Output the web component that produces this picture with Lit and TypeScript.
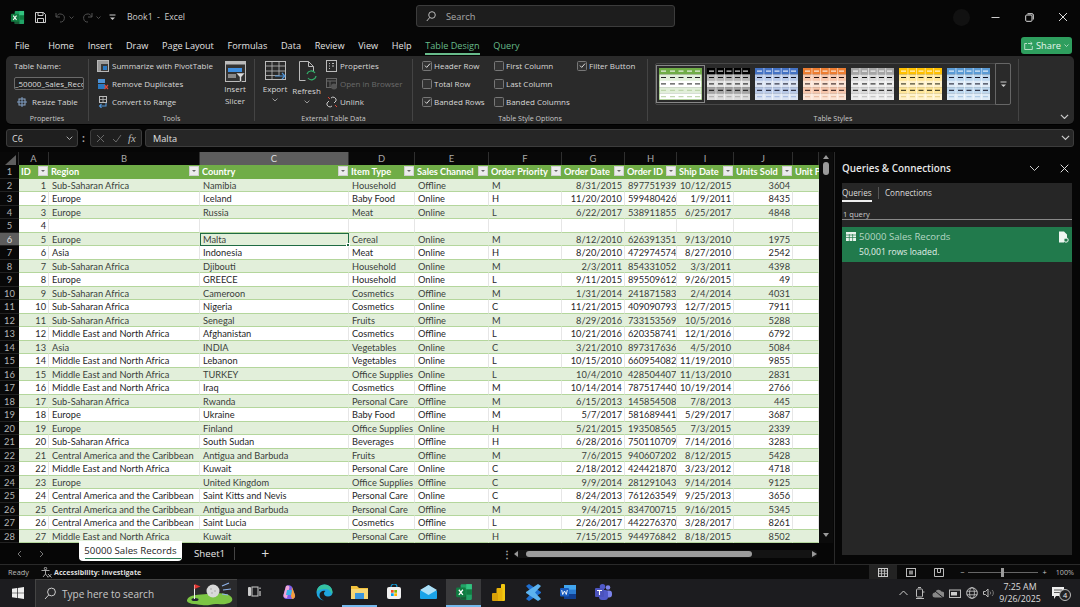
import { LitElement, html, css, svg } from "lit";
import { customElement } from "lit/decorators.js";

type Row = string[];
const D: Row[] = [
  ["1","Sub-Saharan Africa","Namibia","Household","Offline","M","8/31/2015","897751939","10/12/2015","3604"],
  ["2","Europe","Iceland","Baby Food","Online","H","11/20/2010","599480426","1/9/2011","8435"],
  ["3","Europe","Russia","Meat","Online","L","6/22/2017","538911855","6/25/2017","4848"],
  ["4","","","","","","","","",""],
  ["5","Europe","Malta","Cereal","Online","M","8/12/2010","626391351","9/13/2010","1975"],
  ["6","Asia","Indonesia","Meat","Online","H","8/20/2010","472974574","8/27/2010","2542"],
  ["7","Sub-Saharan Africa","Djibouti","Household","Online","M","2/3/2011","854331052","3/3/2011","4398"],
  ["8","Europe","GREECE","Household","Online","L","9/11/2015","895509612","9/26/2015","49"],
  ["9","Sub-Saharan Africa","Cameroon","Cosmetics","Offline","M","1/31/2014","241871583","2/4/2014","4031"],
  ["10","Sub-Saharan Africa","Nigeria","Cosmetics","Online","C","11/21/2015","409090793","12/7/2015","7911"],
  ["11","Sub-Saharan Africa","Senegal","Fruits","Offline","M","8/29/2016","733153569","10/5/2016","5288"],
  ["12","Middle East and North Africa","Afghanistan","Cosmetics","Offline","L","10/21/2016","620358741","12/1/2016","6792"],
  ["13","Asia","INDIA","Vegetables","Online","C","3/21/2010","897317636","4/5/2010","5084"],
  ["14","Middle East and North Africa","Lebanon","Vegetables","Online","L","10/15/2010","660954082","11/19/2010","9855"],
  ["15","Middle East and North Africa","TURKEY","Office Supplies","Online","L","10/4/2010","428504407","11/13/2010","2831"],
  ["16","Middle East and North Africa","Iraq","Cosmetics","Offline","M","10/14/2014","787517440","10/19/2014","2766"],
  ["17","Sub-Saharan Africa","Rwanda","Personal Care","Offline","M","6/15/2013","145854508","7/8/2013","445"],
  ["18","Europe","Ukraine","Baby Food","Offline","M","5/7/2017","581689441","5/29/2017","3687"],
  ["19","Europe","Finland","Office Supplies","Online","H","5/21/2015","193508565","7/3/2015","2339"],
  ["20","Sub-Saharan Africa","South Sudan","Beverages","Offline","H","6/28/2016","750110709","7/14/2016","3283"],
  ["21","Central America and the Caribbean","Antigua and Barbuda","Fruits","Offline","M","7/6/2015","940607202","8/12/2015","5428"],
  ["22","Middle East and North Africa","Kuwait","Personal Care","Online","C","2/18/2012","424421870","3/23/2012","4718"],
  ["23","Europe","United Kingdom","Office Supplies","Offline","C","9/9/2014","281291043","9/14/2014","9125"],
  ["24","Central America and the Caribbean","Saint Kitts and Nevis","Personal Care","Online","C","8/24/2013","761263549","9/25/2013","3656"],
  ["25","Central America and the Caribbean","Antigua and Barbuda","Personal Care","Offline","M","9/4/2015","834700715","9/16/2015","5345"],
  ["26","Central America and the Caribbean","Saint Lucia","Cosmetics","Offline","L","2/26/2017","442276370","3/28/2017","8261"],
  ["27","Middle East and North Africa","Kuwait","Personal Care","Offline","H","7/15/2015","944976842","8/18/2015","8502"],
];
const HEAD = ["ID","Region","Country","Item Type","Sales Channel","Order Priority","Order Date","Order ID","Ship Date","Units Sold","Unit Price"];
const LET = ["A","B","C","D","E","F","G","H","I","J",""];
const RIGHT = new Set([0,6,7,8,9]);

const THUMBS = [
  ["#70ad47","#e2efda","#ffffff","#e2efda","#ffffff","#fff","#222","#b5cfa0"],
  ["#000000","#b5b5b5","#e2e2e2","#a5a5a5","#dcdcdc","#fff","#111","#aaa"],
  ["#4472c4","#b8c9e8","#dae3f3","#b8c9e8","#dae3f3","#fff","#112","#9fb4dc"],
  ["#ed7d31","#f6c6ac","#fbe4d5","#f6c6ac","#fbe4d5","#fff","#211","#e4b49a"],
  ["#a5a5a5","#d9d9d9","#ededed","#d9d9d9","#ededed","#fff","#111","#bbb"],
  ["#ffc000","#ffe699","#fff2cc","#ffe699","#fff2cc","#fff","#221","#e6ce80"],
  ["#5b9bd5","#bdd7ee","#deebf7","#bdd7ee","#deebf7","#fff","#112","#a4c3df"],
];

const thumb = (c: string[]) => html`<svg width="43" height="32" viewBox="0 0 43 32">
  ${[0,1,2,3,4].map(i => svg`<rect x="0" y="${i*6.4}" width="43" height="6.6" fill="${c[i]}"/>
    ${[2,11,19.5,28,36].map(x => svg`<rect x="${x}" y="${i*6.4+2.6}" width="5" height="1" fill="${i===0?c[5]:i===4?c[7]:i===3&&c[0]==="#70ad47"?c[7]:c[6]}"/>`)}`)}
  ${i8(c)}
</svg>`;
function i8(c: string[]) {
  return c[0]==="#70ad47" ? svg`<rect x="0" y="0" width="43" height="32" fill="none" stroke="#70ad47" stroke-width="1"/>`
    : [8.6,17.2,25.8,34.4].map(x => svg`<rect x="${x}" y="0" width=".7" height="32" fill="#fff" opacity=".7"/>`);
}

const chev = (w=6,col="#bbb") => html`<svg width="${w}" height="${w*.6}" viewBox="0 0 10 6"><path d="M1 1l4 4 4-4" fill="none" stroke="${col}" stroke-width="1.3"/></svg>`;
const check = html`<svg width="9" height="9" viewBox="0 0 9 9"><path d="M2 4.6l1.7 1.8L7 2.6" fill="none" stroke="#ddd" stroke-width="1"/></svg>`;
const xlIcon = (s=14) => html`<svg width="${s}" height="${s}" viewBox="0 0 16 16"><rect x="5" y="1" width="10" height="14" rx="1" fill="#21a366"/><rect x="10" y="1" width="5" height="4.7" fill="#33c481"/><rect x="5" y="10.4" width="5" height="4.6" fill="#185c37"/><rect x="10" y="5.7" width="5" height="4.7" fill="#107c41"/><rect x="1" y="4" width="8.6" height="8.6" rx="1" fill="#107c41"/><path d="M3.4 6l3.6 4.6M7 6l-3.6 4.6" stroke="#fff" stroke-width="1.1"/></svg>`;

@customElement("app-root")
export class AppRoot extends LitElement {
  static styles = css`
    :host { display:block; width:1080px; height:607px; overflow:hidden; background:#060606; color:#ddd;
      font-family:"Open Sans","Noto Sans",sans-serif; font-size:8px; }
    svg { display:block; flex:none; }
    .title { height:34px; display:flex; align-items:center; position:relative; }
    .logo { margin-left:10px; }
    .save { margin-left:10px; }
    .undo { margin-left:9px; opacity:.45; }
    .small { margin-left:3px; opacity:.6; }
    .redo { margin-left:8px; opacity:.45; }
    .cust { margin-left:8px; }
    .bname { margin-left:11px; width:63px; font-size:8.7px; color:#ccc; white-space:nowrap; }
    .search { margin-left:226px; width:259px; height:22px; box-sizing:border-box; border:1px solid #3c3c3c; border-radius:3px; background:#1d1d1d;
      display:flex; align-items:center; gap:10px; padding-left:9px; color:#aaa; font-size:9.3px; margin-top:-2px; }
    .avatar { margin-left:278px; width:17px; height:17px; border-radius:50%; background:#111; }
    .wbtn { display:flex; justify-content:center; align-items:center; width:34px; }
    .wbtn.first { margin-left:8px; }
    .tabs { height:22px; display:flex; align-items:center; padding-left:15px; gap:13.7px; font-size:9.15px; color:#e4e4e4; position:relative; }
    .tab.file { margin-right:5px; }
    .tab.g { color:#68bb8b; }
    .tab.on { position:relative; }
    .tab.on::after { content:""; position:absolute; left:0; right:0; bottom:-3px; height:1.5px; background:#68bb8b; }
    .share { margin-left:auto; margin-right:8px; width:51px; height:17px; box-sizing:border-box; border-radius:3px; background:#2e9e5e; color:#e6f5ec;
      display:flex; align-items:center; justify-content:center; gap:3px; font-size:9.3px; }
    .ribbon { margin:0 6px; height:68px; background:#2a2a2a; border-radius:5px; display:flex; box-shadow:0 1px 0 #000; position:relative; color:#d8d8d8; }
    .grp { display:flex; flex-direction:column; border-right:1px solid #444; margin:3px 0; box-sizing:border-box; flex:none; }
    .gbody { flex:1; display:flex; min-height:0; }
    .glabel { height:12px; line-height:12px; text-align:center; font-size:7.1px; color:#c8c8c8; margin-bottom:-3px; }
    .stack { display:flex; flex-direction:column; justify-content:space-between; height:49px; }
    .line { display:flex; align-items:center; height:13px; gap:3px; white-space:nowrap; }
    .dim { color:#6a6a6a; }
    .tname { width:70px; height:13px; box-sizing:border-box; border:1px solid #6a6a6a; border-radius:2px; font-size:8px; line-height:11px; overflow:hidden; white-space:nowrap; color:#ddd; background:#222; }
    .big { display:flex; flex-direction:column; align-items:center; line-height:12px; text-align:center; padding-top:2px; box-sizing:border-box; }
    .big .tx { margin-top:1px; }
    .big .tx.r { margin-top:3px; }
    .big .cv { margin-top:3px; }
    .cb { width:10px; height:10px; box-sizing:border-box; border:1px solid #777; border-radius:1.5px; display:flex; align-items:center; justify-content:center; background:#333; }
    .gal { position:relative; margin:4px 0 0 7px; width:356px; height:42px; box-sizing:border-box; border:1px solid #484848; border-radius:2px; display:flex; align-items:center; padding-left:3px; gap:5px; }
    .gal .t { flex:none; padding:0; }
    .gal .t.on { outline:1px solid #888; outline-offset:2px; }
    .gdd { position:absolute; right:-1px; top:-1px; bottom:-1px; width:16px; border:1px solid #666; border-radius:0 2px 2px 0; display:flex; align-items:center; justify-content:center; background:#2a2a2a; box-sizing:border-box; }
    .collapse { position:absolute; right:5px; bottom:5px; }
    .fbar { margin:5px 6px 5px; height:18px; display:flex; align-items:stretch; }
    .nbox { width:72px; box-sizing:border-box; padding:0 4px 0 5px; border:1px solid #3c3c3c; border-radius:3px; background:#1f1f1f; display:flex; justify-content:space-between; align-items:center; font-size:9px; color:#ddd; }
    .fdots { width:13px; display:flex; align-items:center; justify-content:center; color:#aaa; font-weight:700; font-size:10px; margin-left:-1px; }
    .fbtn { width:52px; box-sizing:border-box; border:1px solid #3c3c3c; border-radius:3px; background:#1f1f1f; display:flex; align-items:center; justify-content:space-between; padding:0 5px; }
    .fx { font-family:"Liberation Serif",serif; font-style:italic; font-size:11px; color:#bbb; }
    .ftext { flex:1; margin-left:3px; box-sizing:border-box; border:1px solid #3c3c3c; border-radius:3px; background:#262626; display:flex; align-items:center; justify-content:space-between; padding:0 3px 0 7px; font-size:9.2px; color:#e0e0e0; }
    .main { height:413px; display:flex; border-bottom:1px solid #2a2a2a; box-sizing:border-box; }
    .sheet { width:835px; border-right:1px solid #2a2a2a; box-sizing:border-box; display:flex; flex-direction:column; flex:none; }
    .upper { display:flex; height:391px; }
    .gridwrap { width:819px; flex:none; }
    .cols { display:grid; height:13px; font-family:Lato,"Open Sans",sans-serif; font-size:9.4px; color:#a9a9a9; }
    .cols > div { display:flex; align-items:center; justify-content:center; border-right:1px solid #2f2f2f; box-sizing:border-box; background:#080808; }
    .cols > div.sel { background:#5d5d5d; color:#ddd; }
    .corner { position:relative; }
    .corner::after { content:""; position:absolute; right:2px; bottom:0; border-style:solid; border-width:0 0 10px 11px; border-color:transparent transparent #5e5e5e transparent; }
    .rows { display:grid; grid-auto-rows:13.5px; font-family:Lato,"Carlito",sans-serif; font-size:9.25px; color:#1f1f1f; }
    .c { box-sizing:border-box; overflow:hidden; white-space:nowrap; padding:0 2px 0 3px; line-height:13.5px; border-bottom:1px solid #b4d69c; background:#fff; border-right:1px solid #e6e6e6; position:relative; }
    .c.band { background:#e2efda; border-right-color:#e2efda; color:#3a3f3a; }
    .c.rt { text-align:right; }
    .c.sel { outline:1.5px solid #1f6b43; outline-offset:-1px; z-index:2; overflow:visible; }
    .c.sel::after { content:""; position:absolute; right:-2px; bottom:-2px; width:4px; height:4px; background:#1f6b43; border:.5px solid #fff; box-sizing:border-box; }
    .rh { background:#080808; color:#b4b4b4; text-align:center; line-height:13.5px; font-family:Lato,sans-serif; font-size:9.4px; border-bottom:1px solid #222; box-sizing:border-box; }
    .rh.sel { background:#5d5d5d; color:#ddd; }
    .h { background:#70ad47; color:#fff; font-weight:700; box-sizing:border-box; display:flex; align-items:center; padding:0 0 0 2px; white-space:nowrap; overflow:hidden; border-bottom:1px solid #70ad47; font-size:9.2px; }
    .h span { flex:1; overflow:hidden; }
    .fb { width:10px; height:10px; flex:none; background:#ececec; border:.5px solid #d0d0d0; box-sizing:border-box; margin-right:1px; display:flex; align-items:center; justify-content:center; }
    .fb::before { content:""; border-style:solid; border-width:2.5px 2px 0 2px; border-color:#666 transparent transparent transparent; }
    .vs { width:14px; flex:none; background:#0b0b0b; display:flex; flex-direction:column; align-items:center; padding-top:3px; position:relative; }
    .vthumb { width:6px; height:13px; border-radius:3px; background:#9a9a9a; margin-top:3px; }
    .tri-up { border-style:solid; border-width:0 3.5px 4px 3.5px; border-color:transparent transparent #999 transparent; }
    .tri-dn { border-style:solid; border-width:4px 3.5px 0 3.5px; border-color:#999 transparent transparent transparent; position:absolute; bottom:6px; }
    .sbar { flex:1; display:flex; align-items:center; position:relative; }
    .nav { width:79px; display:flex; padding-left:17px; gap:17px; box-sizing:border-box; }
    .stab { width:103px; height:20px; align-self:flex-start; margin-top:-2px; background:#fff; color:#1e1e1e; border-radius:0 0 4px 4px; box-sizing:border-box; display:flex; align-items:flex-start; justify-content:center; font-size:9.7px; padding-top:3px; border-bottom:2px solid #fff; position:relative; z-index:3; }
    .stab::after { content:""; position:absolute; left:6px; right:1px; bottom:0; height:1.5px; background:#2a7a52; }
    .s1 { margin-left:12px; font-size:9.7px; color:#e8e8e8; padding-right:9px; border-right:1px solid #444; line-height:13px; }
    .plus { margin-left:26px; font-size:14px; color:#ddd; line-height:13px; }
    .dots { margin-left:233px; color:#aaa; font-weight:700; font-size:10px; }
    .hs { margin-left:3px; display:flex; align-items:center; width:302px; gap:3px; height:8px; background:#131313; border-radius:4px; position:relative; }
    .hthumb { width:226px; height:6px; border-radius:3px; background:#9c9c9c; margin-left:5px; }
    .tl { border-style:solid; border-width:3px 4px 3px 0; border-color:transparent #999 transparent transparent; margin-left:-1px; }
    .tr { border-style:solid; border-width:3.5px 0 3.5px 5px; border-color:transparent transparent transparent #999; margin-left:auto; }
    .panel { margin-left:7px; width:230px; display:flex; flex-direction:column; height:399px; margin-top:4px; }
    .ptitle { height:24px; margin-bottom:3px; display:flex; align-items:center; color:#e8e8e8; font-size:9.9px; font-weight:600; }
    .ptitle span { flex:1; }
    .ptitle svg + svg { margin-left:20px; margin-right:3px; }
    .pbody { flex:1; background:#262626; display:flex; flex-direction:column; }
    .ptabs { height:19px; display:flex; align-items:center; font-size:8.1px; color:#ddd; }
    .ptabs .q { width:30px; height:19px; line-height:19px; border-bottom:2px solid #eee; box-sizing:border-box; }
    .ptabs .sp { width:1px; height:12px; background:#555; margin:0 6px 0 6px; }
    .pcount { height:18px; line-height:24px; font-size:7.6px; padding-left:1px; color:#ccc; border-bottom:1px solid #888; box-sizing:border-box; }
    .card { margin-top:7px; height:35px; box-sizing:border-box; background:#217a4c; padding:3px 3px 0 4px; color:#c9e2d3; }
    .card .a { display:flex; align-items:center; gap:3px; font-size:9.6px; height:13px; color:#b5d6c3; }
    .card .a span { flex:1; }
    .card .b { margin:3px 0 0 13px; font-size:8.6px; color:#e2efe8; }
    .status { height:14px; display:flex; align-items:center; font-size:7.4px; color:#bbb; padding-left:8px; background:#0a0a0a; }
    .acc { margin-left:12px; display:flex; align-items:center; gap:2px; font-weight:700; color:#ddd; font-size:7.1px; }
    .views { margin-left:auto; display:flex; align-items:center; }
    .v { width:28px; height:14px; display:flex; align-items:center; justify-content:center; }
    .v.on { background:#232323; }
    .zoom { display:flex; align-items:center; margin-left:7px; gap:3px; color:#ccc; }
    .zl { width:70px; height:1px; background:#666; position:relative; margin:0 1px; }
    .zt { position:absolute; left:33px; top:-4px; width:3px; height:9px; background:#9b9b9b; }
    .pct { margin:0 6px 0 9px; font-size:7.2px; }
    .task { height:28px; background:#1c1c1f; display:flex; align-items:center; color:#ccc; }
    .start { width:35px; display:flex; justify-content:center; }
    .tsearch { width:202px; height:28px; box-sizing:border-box; background:#2a2a2c; border-left:1px solid #444; border-top:1px solid #444; display:flex; align-items:center; padding-left:8px; gap:6px; font-size:10px; color:#c8c8c8; position:relative; }
    .tsearch span { flex:1; white-space:nowrap; }
    .tsearch svg:last-child { margin-right:3px; }
    .apps { display:flex; align-items:center; }
    .app { width:34.9px; height:28px; display:flex; align-items:center; justify-content:center; box-sizing:border-box; border-bottom:2px solid transparent; }
    .app.line2 { border-bottom-color:#76b9ed; }
    .app.act { background:#3a3a3c; }
    .tray { margin-left:auto; display:flex; align-items:center; }
    .ti { width:17px; display:flex; justify-content:center; }
    .clock { width:46px; text-align:center; font-size:8.8px; line-height:12.4px; color:#ddd; }
    .notif { width:37px; display:flex; justify-content:center; position:relative; padding-right:7px; box-sizing:border-box; }
    .badge { position:absolute; left:16px; top:2px; width:10px; height:10px; border:1px solid #bbb; border-radius:50%; background:#222; font-size:7.4px; text-align:center; line-height:10px; color:#eee; }
  `;

  get cols() { return "19px 30px 151px 149px 66px 74px 73px 63px 52px 57px 59px 26px"; }

  renderRibbon() {
    const g = (w: number, label: string, body: unknown) => html`<div class="grp" style="width:${w}px"><div class="gbody">${body}</div><div class="glabel">${label}</div></div>`;
    const cb = (on: boolean, t: string) => html`<div class="line" style="gap:2px"><div class="cb">${on ? check : ""}</div><span>${t}</span></div>`;
    return html`<div class="ribbon">
      ${g(83, "Properties", html`<div class="stack" style="padding-left:8px">
        <div class="line">Table Name:</div>
        <div class="tname">_50000_Sales_Records</div>
        <div class="line" style="gap:5px;padding-left:3px"><svg width="10" height="10" viewBox="0 0 10 10"><rect x="2" y="2" width="6" height="6" fill="none" stroke="#8ea9c9"/><path d="M5 0v10M0 5h10" stroke="#7c9cc4" stroke-width="1"/></svg>Resize Table</div>
      </div>`)}
      ${g(166, "Tools", html`<div class="stack" style="padding-left:8px;width:118px">
        <div class="line"><svg width="12" height="12" viewBox="0 0 12 12"><rect x=".5" y=".5" width="11" height="11" fill="#3a3a3a" stroke="#b8b8b8"/><rect x="1" y="1" width="3" height="10" fill="#999"/><rect x="1" y="1" width="10" height="3" fill="#999"/><rect x="6" y="6" width="4" height="4" fill="#2b79c2"/></svg>Summarize with PivotTable</div>
        <div class="line"><svg width="12" height="12" viewBox="0 0 12 12"><rect x="1" y="1" width="7" height="4" fill="#4f93d6"/><rect x="1" y="6" width="7" height="5" fill="#2b79c2"/><path d="M7.5 7l3.5 4M11 7l-3.5 4" stroke="#e04b3a" stroke-width="1.2"/></svg>Remove Duplicates</div>
        <div class="line"><svg width="12" height="12" viewBox="0 0 12 12"><rect x="2.5" y=".5" width="7" height="6" fill="none" stroke="#bbb"/><path d="M2.5 3.5h7M6 .5v6" stroke="#bbb" stroke-width=".8"/><path d="M9 7v3H3M4.5 8L2.500 10l2 2" fill="none" stroke="#4f93d6" stroke-width="1.1"/></svg>Convert to Range</div>
      </div>
      <div class="big" style="margin-left:9px;width:22px;white-space:nowrap">
        <svg width="21" height="21" viewBox="0 0 21 21"><rect x=".5" y=".5" width="20" height="20" fill="#333" stroke="#bbb"/><rect x=".5" y=".5" width="20" height="3" fill="#bbb"/><rect x="3" y="7" width="14" height="4" fill="#3f8fe0"/><rect x="3" y="13" width="8" height="4" fill="#888"/><path d="M11 12h9l-3.500 4v5l-2-1v-4z" fill="#ddd" stroke="#222" stroke-width=".5"/></svg>
        <div class="tx">Insert<br>Slicer</div></div>`)}
      ${g(158, "External Table Data", html`
        <div class="big" style="width:24px;margin-left:8px;margin-right:6px">
          <svg width="21" height="21" viewBox="0 0 21 21"><rect x=".5" y=".5" width="20" height="18" fill="none" stroke="#bbb"/><path d="M.5 5h20M.5 10h20M.5 14.500h14M7 .5v18M14 .5v14" stroke="#bbb" stroke-width=".8"/><path d="M10 15h10M17 12l3 3-3 3" fill="none" stroke="#4f93d6" stroke-width="1.200"/></svg>
          <div class="tx">Export</div><div class="cv">${chev()}</div></div>
        <div class="big" style="width:27px;margin-right:6px">
          <svg width="21" height="21" viewBox="0 0 21 21"><path d="M3.500.5h9l5 5v5M3.500.5v19h6" fill="none" stroke="#bbb"/><path d="M12.500.5v5h5" fill="none" stroke="#bbb"/><path d="M11 13a4.500 4.500 0 0 1 8-1M20 15a4.500 4.500 0 0 1-8 2" fill="none" stroke="#33b06a" stroke-width="1.200"/></svg>
          <div class="tx r">Refresh</div><div class="cv">${chev()}</div></div>
        <div class="stack" style="flex:none">
          <div class="line"><svg width="11" height="12" viewBox="0 0 11 12"><rect x=".5" y=".5" width="10" height="11" fill="none" stroke="#bbb"/><path d="M3 3.500h1M3 6h1M3 8.500h1M6 3.500h2M6 6h2" stroke="#bbb"/></svg>Properties</div>
          <div class="line dim"><svg width="11" height="12" viewBox="0 0 11 12"><rect x=".5" y=".5" width="10" height="9" fill="none" stroke="#666"/><path d="M.5 3h10M4 3v6" stroke="#666"/><circle cx="8" cy="8.500" r="3" fill="#555"/></svg>Open in Browser</div>
          <div class="line"><svg width="11" height="12" viewBox="0 0 11 12"><path d="M5 2a3 3 0 0 1 5 3l-2 2M6 10a3 3 0 0 1-5-3l2-2" fill="none" stroke="#ccc"/><path d="M2 1l2 2M9 9l2 2" stroke="#e04b3a"/></svg>Unlink</div>
        </div>`)}
      ${g(235, "Table Style Options", html`
        <div class="stack" style="padding-left:9px;width:72px">${cb(true,"Header Row")}${cb(false,"Total Row")}${cb(true,"Banded Rows")}</div>
        <div class="stack" style="width:83px">${cb(false,"First Column")}${cb(false,"Last Column")}${cb(false,"Banded Columns")}</div>
        <div class="stack">${cb(true,"Filter Button")}</div>`)}
      ${g(371, "Table Styles", html`<div class="gal">
        ${THUMBS.map((c,i) => html`<div class="t ${i===0?"on":""}">${thumb(c)}</div>`)}
        <div class="gdd"><svg width="7" height="7" viewBox="0 0 7 7"><path d="M.5 1h6" stroke="#ccc"/><path d="M1 3.500h5L3.500 6z" fill="#ccc"/></svg></div>
      </div>`)}
      <div class="collapse">${chev(9,"#ccc")}</div>
    </div>`;
  }

  renderGrid() {
    return html`<div class="gridwrap">
      <div class="cols" style="grid-template-columns:${this.cols}">
        <div class="corner"></div>
        ${LET.map(l => html`<div class="${l==="C"?"sel":""}">${l}</div>`)}
      </div>
      <div class="rows" style="grid-template-columns:${this.cols}">
        <div class="rh">1</div>
        ${HEAD.map((h,i) => html`<div class="h"><span>${h}</span>${i<10?html`<div class="fb"></div>`:""}</div>`)}
        ${D.map((r,ri) => {
          const band = ri % 2 === 0;
          return html`<div class="rh ${ri===4?"sel":""}">${ri+2}</div>
            ${r.map((v,ci) => html`<div class="c ${band?"band":""} ${RIGHT.has(ci)?"rt":""} ${ri===4&&ci===2?"sel":""}">${v}</div>`)}
            <div class="c ${band?"band":""}"></div>`;
        })}
      </div>
    </div>`;
  }

  render() {
    return html`
    <div class="title">
      <div class="logo">${xlIcon(15)}</div>
      <svg class="save" width="11" height="11" viewBox="0 0 11 11"><path d="M.5.500h8l2 2v8H.500z" fill="none" stroke="#ccc"/><path d="M3 .500v3h5v-3M2.500 10.500v-4h6v4" fill="none" stroke="#ccc"/></svg>
      <svg class="undo" width="11" height="11" viewBox="0 0 11 11"><path d="M1 1v4h4M1.500 5A4 4 0 1 1 5 10" fill="none" stroke="#aaa"/></svg>
      <div class="small">${chev(5)}</div>
      <svg class="redo" width="11" height="11" viewBox="0 0 11 11"><path d="M10 1v4H6M9.500 5A4 4 0 1 0 6 10" fill="none" stroke="#aaa"/></svg>
      <div class="small">${chev(5)}</div>
      <svg class="cust" width="7" height="7" viewBox="0 0 7 7"><path d="M.5 1h6" stroke="#ccc"/><path d="M1 3.500h5L3.500 6z" fill="#ccc"/></svg>
      <div class="bname">Book1 &nbsp;-&nbsp; Excel</div>
      <div class="search"><svg width="10" height="11" viewBox="0 0 10 11"><circle cx="6" cy="4" r="3.300" fill="none" stroke="#bbb"/><path d="M3.700 6.500L.8 10" stroke="#bbb"/></svg>Search</div>
      <div class="avatar"></div>
      <div class="wbtn first"><svg width="9" height="9" viewBox="0 0 9 9"><path d="M.5 4.500h8" stroke="#ccc"/></svg></div>
      <div class="wbtn"><svg width="9" height="9" viewBox="0 0 9 9"><rect x=".7" y="2" width="6.300" height="6.300" rx="1" fill="none" stroke="#ddd"/><path d="M2.500 .7h4.500a1.300 1.300 0 0 1 1.300 1.300v4.500" fill="none" stroke="#ddd"/></svg></div>
      <div class="wbtn"><svg width="10" height="10" viewBox="0 0 10 10"><path d="M1 1l8 8M9 1l-8 8" stroke="#ddd"/></svg></div>
    </div>
    <div class="tabs">
      ${["File","Home","Insert","Draw","Page Layout","Formulas","Data","Review","View","Help"].map(t => html`<div class="tab ${t==="File"?"file":""}">${t}</div>`)}
      <div class="tab g on">Table Design</div><div class="tab g">Query</div>
      <div class="share"><svg width="9" height="9" viewBox="0 0 9 9"><path d="M3 2.500H.7v6h7.600V5M4 2.500h4M6.500 1l1.700 1.500L6.500 4" fill="none" stroke="#d6efe0" stroke-width=".8"/></svg>Share ${chev(5,"#e6f5ec")}</div>
    </div>
    ${this.renderRibbon()}
    <div class="fbar">
      <div class="nbox"><span>C6</span>${chev(7)}</div>
      <div class="fdots">:</div>
      <div class="fbtn">
        <svg width="9" height="9" viewBox="0 0 9 9"><path d="M1 1l7 7M8 1l-7 7" stroke="#6a6a6a"/></svg>
        <svg width="10" height="9" viewBox="0 0 10 9"><path d="M1 5l3 3 5-7" fill="none" stroke="#6a6a6a"/></svg>
        <span class="fx">fx</span>
      </div>
      <div class="ftext"><span>Malta</span>${chev(9,"#ccc")}</div>
    </div>
    <div class="main">
      <div class="sheet">
        <div class="upper">
          ${this.renderGrid()}
          <div class="vs"><div class="tri-up"></div><div class="vthumb"></div><div class="tri-dn"></div></div>
        </div>
        <div class="sbar">
          <div class="nav"><svg width="5" height="8" viewBox="0 0 5 8"><path d="M4 1L1 4l3 3" fill="none" stroke="#777"/></svg><svg width="5" height="8" viewBox="0 0 5 8"><path d="M1 1l3 3-3 3" fill="none" stroke="#777"/></svg></div>
          <div class="stab">50000 Sales Records</div>
          <div class="s1">Sheet1</div>
          <div class="plus">+</div>
          <div class="dots">⋮</div>
          <div class="hs"><div class="tl"></div><div class="hthumb"></div><div class="tr"></div></div>
        </div>
      </div>
      <div class="panel">
        <div class="ptitle"><span>Queries &amp; Connections</span>
          <svg width="11" height="7" viewBox="0 0 11 7"><path d="M1 1l4.500 4.500L10 1" fill="none" stroke="#ccc"/></svg>
          <svg width="9" height="9" viewBox="0 0 9 9"><path d="M.7.700l7.600 7.600M8.300.7L.7 8.300" stroke="#ddd"/></svg>
        </div>
        <div class="pbody">
          <div class="ptabs"><div class="q">Queries</div><div class="sp"></div><div>Connections</div></div>
          <div class="pcount">1 query</div>
          <div class="card">
            <div class="a"><svg width="10" height="9" viewBox="0 0 10 9"><rect width="10" height="9" fill="#e8f3ec"/><path d="M0 3h10M0 5.500h10M3.300 2v7M6.600 2v7" stroke="#217a4c" stroke-width=".7"/></svg><span>50000 Sales Records</span>
              <svg width="11" height="12" viewBox="0 0 11 12"><path d="M1 .5h5l3 3v4H6v4H1z" fill="#eef6f1"/><circle cx="8" cy="9" r="2.200" fill="none" stroke="#eef6f1"/></svg></div>
            <div class="b">50,001 rows loaded.</div>
          </div>
        </div>
      </div>
    </div>
    <div class="status">
      <span>Ready</span>
      <div class="acc"><svg width="11" height="11" viewBox="0 0 11 11"><circle cx="4.500" cy="1.500" r="1.200" fill="none" stroke="#ccc" stroke-width=".8"/><path d="M.5 3.500h8M4.500 3.500V7L2 10M4.500 7L7 10" fill="none" stroke="#ccc" stroke-width=".8"/><path d="M7 7l3.500 3.500M10.500 7L7 10.500" stroke="#ccc" stroke-width=".8"/></svg>Accessibility: Investigate</div>
      <div class="views">
        <div class="v on"><svg width="10" height="9" viewBox="0 0 10 9"><rect x=".5" y=".5" width="9" height="8" fill="none" stroke="#ccc"/><path d="M.5 3h9M.5 5.700h9M3.500.5v8M6.500.5v8" stroke="#ccc" stroke-width=".8"/></svg></div>
        <div class="v"><svg width="10" height="9" viewBox="0 0 10 9"><rect x=".5" y=".5" width="9" height="8" fill="none" stroke="#bbb"/><rect x="3" y="2.500" width="4" height="4" fill="#888"/></svg></div>
        <div class="v"><svg width="10" height="9" viewBox="0 0 10 9"><path d="M.5 8.500V.5h9v8M.5 8.500h9M3.500.5v4h3v-4" fill="none" stroke="#bbb"/></svg></div>
        <div class="zoom"><span>−</span><div class="zl"><div class="zt"></div></div><span>+</span></div>
        <div class="pct">100%</div>
      </div>
    </div>
    <div class="task">
      <div class="start"><svg width="12" height="12" viewBox="0 0 12 12"><path d="M0 1.700L5 1v4.700H0zM5.700.9L12 0v5.700H5.700zM0 6.300h5V11l-5-.7zM5.700 6.300H12V12l-6.300-.9z" fill="#eee"/></svg></div>
      <div class="tsearch">
        <svg width="12" height="13" viewBox="0 0 12 13"><circle cx="7.500" cy="5" r="3.900" fill="none" stroke="#ccc"/><path d="M4.700 8L1 12" stroke="#ccc"/></svg>
        <span>Type here to search</span>
        <svg width="48" height="24" viewBox="0 0 48 24"><path d="M1 18c2-6 12-5 20-6s22-2 25 4c2 5-6 7-14 6-6-.7-9 2-16 1S0 22 1 18z" fill="#7cc544"/><ellipse cx="9" cy="17.500" rx="3.500" ry="1.500" fill="#223"/><path d="M8.500 17V3" stroke="#eee"/><path d="M8.500 2l6 2.500-6 2.500z" fill="#e3342f"/><circle cx="27" cy="9" r="6.500" fill="#d9d9d9"/><circle cx="25" cy="7" r=".7" fill="#999"/><circle cx="29" cy="9" r=".7" fill="#999"/><circle cx="26" cy="11" r=".7" fill="#999"/><path d="M36 4l7-3M37 8l8-1M36 12l6 1" stroke="#8fb3e8" stroke-width="1.200"/></svg>
      </div>
      <div class="apps">
        <div class="app"><svg width="13" height="12" viewBox="0 0 13 12"><rect x="0" y="1" width="3" height="9" rx="1" fill="#ccc"/><rect x="4" y="1" width="6" height="9" fill="none" stroke="#ccc"/><path d="M12 1.500v1.500M12 5v5" stroke="#ccc" stroke-width="1.200"/></svg></div>
        <div class="app"><svg width="17" height="17" viewBox="0 0 17 17"><path d="M5 2c2-1.500 5-1 6 1l3 8c.6 2-1 4-3 4H6c-3 0-4-2-3.500-4L5 2z" fill="#7a5de8"/><path d="M2.500 11L5 2c1.500-1 3-.5 3.500 1L6 14c-2 .5-4-1-3.500-3z" fill="#f0a6d8"/><path d="M11 3l3 8c.5 2-1 4-3 4l-1-3z" fill="#f2a03c"/><path d="M6 6h5l-1 5H5z" fill="#3bb3e8"/></svg></div>
        <div class="app"><svg width="17" height="17" viewBox="0 0 17 17"><path d="M8.500.5a8 8 0 0 1 8 8c0 2.500-2 4-4.500 4-3 0-4-1.500-4-3 0-1 .6-2 1.500-2.500-3-1-6 1-6 4 0 3 2.500 5.500 5.500 5.500A8 8 0 0 1 .5 8.500a8 8 0 0 1 8-8z" fill="#1fa6df"/><path d="M.5 8C1 3.500 4.500.5 8.500.5c4 0 8 3 8 7.500 0 1-.5 1.800-1 2.300-.4-3.300-3-5.300-6.500-5.300-3.500 0-7.500 1-8.500 3z" fill="#35c1a0"/></svg></div>
        <div class="app line2"><svg width="17" height="15" viewBox="0 0 17 15"><path d="M0 1h6l2 2h9v11H0z" fill="#f3c23c"/><rect x="0" y="4" width="17" height="10" fill="#f7d774"/><rect x="4" y="8" width="9" height="6" fill="#3a96dd"/></svg></div>
        <div class="app"><svg width="16" height="16" viewBox="0 0 16 16"><rect x="1" y="3" width="14" height="12" rx="2" fill="#f1f1f1"/><path d="M5 3a3 3 0 0 1 6 0" fill="none" stroke="#0f9bd7" stroke-width="1.200"/><rect x="5" y="6" width="2.700" height="2.700" fill="#f25022"/><rect x="8.300" y="6" width="2.700" height="2.700" fill="#7fba00"/><rect x="5" y="9.300" width="2.700" height="2.700" fill="#00a4ef"/><rect x="8.300" y="9.300" width="2.700" height="2.700" fill="#ffb900"/></svg></div>
        <div class="app"><svg width="17" height="14" viewBox="0 0 17 14"><path d="M8.500 0L17 6v7a1 1 0 0 1-1 1H1a1 1 0 0 1-1-1V6z" fill="#1aa3e8"/><path d="M0 5l8.500 5L17 5 8.500 0z" fill="#ade0f7"/></svg></div>
        <div class="app act line2">${xlIcon(18)}</div>
        <div class="app"><svg width="13" height="17" viewBox="0 0 13 17"><rect x="9" y="0" width="4" height="17" rx="1" fill="#f2c811"/><rect x="4.500" y="4" width="6" height="13" rx="1" fill="#e8b30b"/><rect x="0" y="9" width="6" height="8" rx="1" fill="#d8a008"/></svg></div>
        <div class="app"><svg width="15" height="17" viewBox="0 0 15 17"><path d="M0 2l3-2 12 8v1L3 17l-3-2 6-6.500z" fill="#1f6fd0"/><path d="M15 2l-3-2L0 8v1l12 8 3-2-6-6.500z" fill="#5cb3f0"/></svg></div>
        <div class="app"><svg width="17" height="16" viewBox="0 0 17 16"><path d="M4 1h12v14H4z" fill="#2b7cd3"/><path d="M4 1h12v4.600H4z" fill="#41a5ee"/><path d="M4 10h12v5H4z" fill="#103f91"/><rect x="0" y="4" width="9" height="8.500" rx="1" fill="#185abd"/><path d="M1.700 6l1 4.500L4.500 7l1.800 3.500L7.300 6" fill="none" stroke="#fff" stroke-width=".9"/></svg></div>
        <div class="app"><svg width="17" height="16" viewBox="0 0 17 16"><circle cx="13" cy="3.500" r="2.300" fill="#7b83eb"/><circle cx="7.500" cy="2.800" r="2.800" fill="#5059c9"/><rect x="10" y="6.500" width="7" height="7" rx="3" fill="#7b83eb"/><rect x="4" y="6" width="9" height="10" rx="3" fill="#5059c9"/><rect x="0" y="4" width="9" height="9" rx="1" fill="#4b53bc"/><path d="M2 6.500h5M4.500 6.500v4.500" stroke="#fff" stroke-width="1.100"/></svg></div>
      </div>
      <div class="tray">
        <div class="ti"><svg width="9" height="6" viewBox="0 0 9 6"><path d="M.5 5l4-4 4 4" fill="none" stroke="#ccc"/></svg></div>
        <div class="ti"><svg width="9" height="12" viewBox="0 0 9 12"><rect x=".5" y="2" width="6" height="8" rx="1" fill="none" stroke="#bbb"/><path d="M2 .5h3M6.500 5H8.500M0 11.500h8" stroke="#bbb"/></svg></div>
        <div class="ti"><svg width="12" height="9" viewBox="0 0 12 9"><path d="M3 8.500a2.500 2.500 0 0 1 0-5 3.500 3.500 0 0 1 6.500-1A2.800 2.800 0 0 1 9.500 8.500z" fill="#888"/><path d="M1 .5l10 8" stroke="#1c1c1f" stroke-width="1"/></svg></div>
        <div class="ti"><svg width="12" height="9" viewBox="0 0 12 9"><rect x=".5" y="1" width="11" height="7.500" fill="none" stroke="#bbb"/><rect x="2" y="3" width="6" height="3.500" fill="#ccc"/></svg></div>
        <div class="ti"><svg width="12" height="12" viewBox="0 0 12 12"><circle cx="6" cy="6" r="5.300" fill="none" stroke="#ccc" stroke-width=".9"/><ellipse cx="6" cy="6" rx="2.400" ry="5.300" fill="none" stroke="#ccc" stroke-width=".8"/><path d="M.7 4.200h10.600M.7 7.800h10.600" stroke="#ccc" stroke-width=".8"/></svg></div>
        <div class="ti"><svg width="11" height="10" viewBox="0 0 11 10"><path d="M.5 3.500h2L5 1v8L2.500 6.500h-2z" fill="none" stroke="#bbb"/><path d="M7 3.500a2 2 0 0 1 0 3M9 2a4 4 0 0 1 0 6" fill="none" stroke="#777"/></svg></div>
        <div class="clock">7:25 AM<br>9/26/2025</div>
        <div class="notif"><svg width="12" height="12" viewBox="0 0 12 12"><path d="M0 0h12v9H4l-2 3V9H0z" fill="#eee"/><path d="M2 3h8M2 5.500h6" stroke="#333" stroke-width=".8"/></svg><div class="badge">4</div></div>
      </div>
    </div>
    `;
  }
}
